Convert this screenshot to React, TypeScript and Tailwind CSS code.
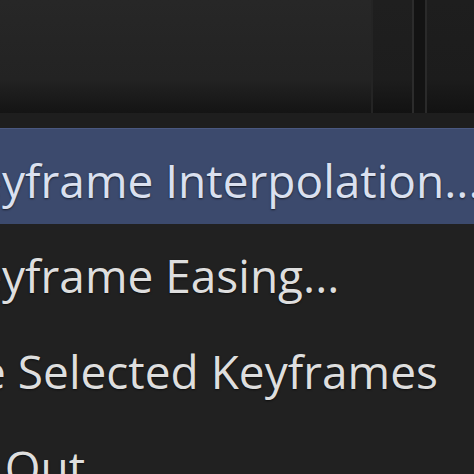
export default function App() {
  const rows = [
    { label: 'Keyframe Interpolation...', offset: 'ml-[-52px]', active: true },
    { label: 'Keyframe Easing...', offset: 'ml-[-52px]', active: false },
    { label: 'Delete Selected Keyframes', offset: 'ml-[-133px]', active: false },
    { label: 'Ease Out', offset: 'ml-[-106px]', active: false },
  ];

  return (
    <div className="w-[474px] h-[474px] overflow-hidden bg-[#212121] font-['Open_Sans',sans-serif]">
      {/* panel behind the menu */}
      <div className="flex h-[113px]">
        <div className="w-[371px] bg-gradient-to-b from-[#272727] via-[#232323] via-70% to-[#141414]" />
        <div className="w-[2px] bg-[#242424]" />
        <div className="w-[39px] bg-gradient-to-b from-[#1f1f1f] via-[#1d1d1d] via-70% to-[#121212]" />
        <div className="w-[2px] bg-[#2c2c2c]" />
        <div className="w-[11px] bg-[#131313]" />
        <div className="w-[2px] bg-[#2a2a2a]" />
        <div className="flex-1 bg-gradient-to-b from-[#1e1e1e] via-[#1c1c1c] via-70% to-[#121212]" />
      </div>
      <div className="h-[15px] bg-[#1e1e1e]" />

      {/* context menu */}
      <div className="flex flex-col">
        {rows.map((r) => (
          <div
            key={r.label}
            className={`h-[96px] pt-[19px] whitespace-nowrap ${
              r.active ? 'bg-[#3c4a6d] border-t border-[#4a5880]' : ''
            }`}
          >
            <span
              className={`block ${r.offset} text-[46px] leading-[64px] [text-shadow:0_1px_2px_rgba(0,0,0,0.6)] ${
                r.active ? 'text-[#dae0ef]' : 'text-[#dedede]'
              }`}
            >
              {r.label}
            </span>
          </div>
        ))}
      </div>
    </div>
  );
}
